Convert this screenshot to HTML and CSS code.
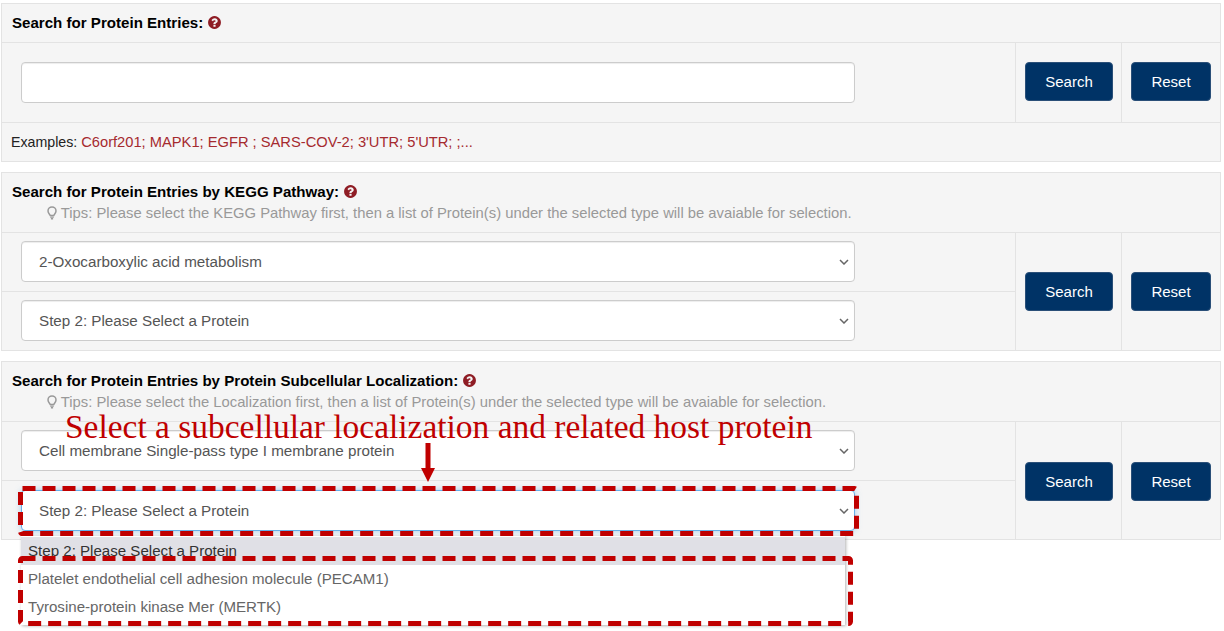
FILE: index.html
```html
<!DOCTYPE html>
<html>
<head>
    <meta charset="UTF-8">
    <meta name="viewport" content="width=device-width, initial-scale=1.0">
    <title>Search for Protein Entries</title>
    <link rel="stylesheet" href="styles.css">
</head>
<body>
    <svg width="0" height="0" class="icon-defs">
        <symbol id="icon-help" viewBox="0 0 1792 1792">
            <path d="M1024 1376v-192q0-14-9-23t-23-9h-192q-14 0-23 9t-9 23v192q0 14 9 23t23 9h192q14 0 23-9t9-23zm256-672q0-88-55.5-163t-138.5-116-170-41q-243 0-371 213-15 24 8 42l132 100q7 6 19 6 16 0 25-12 53-68 86-92 34-24 86-24 48 0 85.5 26t37.5 59q0 38-20 61t-68 45q-63 28-115.5 86.5t-52.5 125.5v36q0 14 9 23t23 9h192q14 0 23-9t9-23q0-19 21.5-49.5t54.5-49.5q32-18 49-28.5t46-35 44.5-48 28-60.5 12.5-81zm384 192q0 209-103 385.5t-279.5 279.5-385.5 103-385.5-103-279.5-279.5-103-385.5 103-385.5 279.5-279.5 385.5-103 385.5 103 279.5 279.5 103 385.5z"/>
        </symbol>
        <symbol id="icon-bulb" viewBox="0 0 10 14">
            <path d="M3.3 9.600C3 8.300 1 7.400 1 4.900A4 4 0 0 1 9 4.900C9 7.400 7 8.300 6.700 9.600Z" fill="none" stroke="currentColor" stroke-width="1.500"/>
            <path d="M3.200 10.400h3.600v1.300H3.200zM3.900 12.100h2.200v1.300H3.900z"/>
        </symbol>
    </svg>

    <div class="page">
        <!-- Keyword search -->
        <section class="panel panel-keyword">
            <div class="panel-head panel-head-short">
                <h4>Search for Protein Entries: <svg class="help"><use href="#icon-help"/></svg></h4>
            </div>
            <div class="panel-body">
                <div class="fields">
                    <div class="field field-single"><input type="text" class="control"></div>
                </div>
                <div class="btn-cell"><button class="btn btn-search">Search</button></div>
                <div class="btn-cell"><button class="btn btn-reset">Reset</button></div>
            </div>
            <div class="panel-foot">
                Examples: <span class="examples">C6orf201; MAPK1; EGFR ; SARS-COV-2; 3'UTR; 5'UTR; ;...</span>
            </div>
        </section>

        <!-- KEGG pathway search -->
        <section class="panel">
            <div class="panel-head">
                <h4>Search for Protein Entries by KEGG Pathway: <svg class="help"><use href="#icon-help"/></svg></h4>
                <p class="tips"><svg class="bulb"><use href="#icon-bulb"/></svg> Tips: Please select the KEGG Pathway first, then a list of Protein(s) under the selected type will be avaiable for selection.</p>
            </div>
            <div class="panel-body">
                <div class="fields">
                    <div class="field">
                        <select class="control"><option>2-Oxocarboxylic acid metabolism</option></select>
                    </div>
                    <div class="field">
                        <select class="control"><option>Step 2: Please Select a Protein</option></select>
                    </div>
                </div>
                <div class="btn-cell"><button class="btn btn-search">Search</button></div>
                <div class="btn-cell"><button class="btn btn-reset">Reset</button></div>
            </div>
        </section>

        <!-- Subcellular localization search -->
        <section class="panel panel-location">
            <div class="panel-head">
                <h4>Search for Protein Entries by Protein Subcellular Localization: <svg class="help"><use href="#icon-help"/></svg></h4>
                <p class="tips"><svg class="bulb"><use href="#icon-bulb"/></svg> Tips: Please select the Localization first, then a list of Protein(s) under the selected type will be avaiable for selection.</p>
            </div>
            <div class="panel-body">
                <div class="fields">
                    <div class="field">
                        <select class="control"><option>Cell membrane Single-pass type I membrane protein</option></select>
                    </div>
                    <div class="field">
                        <select class="control control-focus"><option>Step 2: Please Select a Protein</option></select>
                    </div>
                </div>
                <div class="btn-cell"><button class="btn btn-search">Search</button></div>
                <div class="btn-cell"><button class="btn btn-reset">Reset</button></div>
            </div>
        </section>
    </div>

    <!-- Open select list -->
    <ul class="dropdown">
        <li class="dropdown-active">Step 2: Please Select a Protein</li>
        <li>Platelet endothelial cell adhesion molecule (PECAM1)</li>
        <li>Tyrosine-protein kinase Mer (MERTK)</li>
    </ul>

    <!-- Red annotations drawn on top of the screenshot -->
    <div class="note">Select a subcellular localization and related host protein</div>
    <svg class="marks" width="1224" height="631" viewBox="0 0 1224 631">
        <path class="mark-arrow" d="M425.500 443h5v25h4.500l-7 14-7-14h4.500z"/>
        <rect class="mark-box" x="20.500" y="488.500" width="836" height="45" rx="2"/>
        <rect class="mark-box" x="20.500" y="558.500" width="830" height="65" rx="2"/>
    </svg>
</body>
</html>
```

FILE: styles.css
```css
* { box-sizing: border-box; margin: 0; padding: 0; }
body {
    font-family: "Liberation Sans", Arial, sans-serif;
    font-size: 14.6px;
    color: #333;
    background-color: white;
    position: relative;
    height: 631px;
    overflow: hidden;
}
.icon-defs { position: absolute; }
.page {
    display: flex;
    flex-direction: column;
    gap: 10px;
    padding: 3px 3px 0 1px;
}

/* Panels */
.panel {
    background-color: #f5f5f5;
    border: 1px solid #e3e3e3;
}
.panel-head {
    height: 60px;
    padding: 10px 10px 0;
    border-bottom: 1px solid #e3e3e3;
}
.panel-head-short { height: 39px; }
h4 {
    font-size: 15.100px;
    line-height: 17px;
    color: black;
    font-weight: bold;
}
.help {
    width: 15px;
    height: 15px;
    fill: #8f1d25;
    vertical-align: -2px;
}
.tips {
    color: #999;
    font-size: 14.800px;
    line-height: 20px;
    margin-top: 3px;
    padding-left: 35px;
    white-space: nowrap;
}
.bulb {
    width: 10px;
    height: 14px;
    fill: #999;
    color: #999;
    vertical-align: -2px;
}
.panel-body {
    display: grid;
    grid-template-columns: 1013px 106px 1fr;
}
.panel-foot {
    height: 39px;
    padding-left: 9px;
    font-size: 14.200px;
    line-height: 38px;
    border-top: 1px solid #e3e3e3;
    color: #222;
}
.examples {
    font-size: 14.700px;
    color: #a52a2f;
}

/* Form controls */
.field {
    height: 58px;
    padding: 8px 160px 0 19px;
}
.field + .field { border-top: 1px solid #e3e3e3; height: 59px; }
.field-single {
    height: 79px;
    padding-top: 19px;
}
.control {
    display: block;
    width: 100%;
    height: 41px;
    padding: 0 12px 0 17px;
    font-family: inherit;
    font-size: 15.200px;
    color: #555;
    background-color: white;
    border: 1px solid #ccc;
    border-radius: 4px;
    box-shadow: inset 0 1px 1px rgba(0,0,0,0.075);
}
select.control {
    appearance: none;
    background-image: url("data:image/svg+xml,%3Csvg xmlns='http://www.w3.org/2000/svg' width='10' height='6'%3E%3Cpath d='M1 1l4 4 4-4' fill='none' stroke='%23666' stroke-width='1.500'/%3E%3C/svg%3E");
    background-repeat: no-repeat;
    background-position: right 5px center;
}
.control-focus {
    margin-top: 1px;
    border-color: #66afe9;
    box-shadow: 0 0 6px rgba(102,175,233,0.6);
}
.btn-cell {
    display: flex;
    align-items: center;
    padding-left: 9px;
    border-left: 1px solid #e3e3e3;
}
.btn {
    height: 39px;
    font-family: inherit;
    font-size: 15px;
    color: white;
    background-color: #003366;
    border: 1px solid #2a4f78;
    border-radius: 4px;
}
.btn-search { width: 88px; }
.btn-reset { width: 80px; }
.panel-keyword .btn { margin-bottom: 2px; }
.panel-location .btn { margin-top: 1px; }

/* Open select list */
.dropdown {
    position: absolute;
    left: 21px;
    top: 536px;
    width: 824px;
    height: 89px;
    padding-top: 1px;
    list-style: none;
    font-size: 15.100px;
    background-color: white;
    box-shadow: 1px 1px 3px rgba(0,0,0,0.3);
    color: #666;
}
.dropdown li {
    height: 28px;
    line-height: 28px;
    padding-left: 7px;
}
.dropdown .dropdown-active {
    background-color: #e0e0e6;
    color: #333;
}

/* Annotations */
.note {
    position: absolute;
    left: 65px;
    top: 408px;
    font-family: "Liberation Serif", "Times New Roman", serif;
    font-size: 33.450px;
    line-height: 38px;
    color: #c00000;
    white-space: nowrap;
}
.marks {
    position: absolute;
    left: 0;
    top: 0;
}
.mark-arrow { fill: #c00000; }
.mark-box {
    fill: none;
    stroke: #c00000;
    stroke-width: 5;
    stroke-dasharray: 13 7;
}
```
